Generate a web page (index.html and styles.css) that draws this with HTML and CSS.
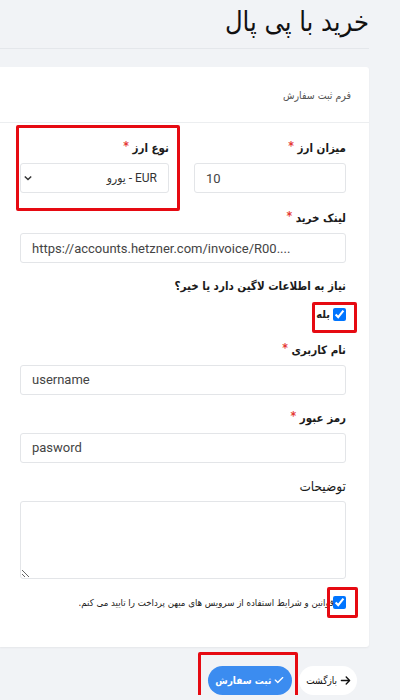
FILE: index.html
```html
<!DOCTYPE html>
<html lang="fa" dir="rtl">
<head>
<meta charset="utf-8">
<title>خرید با پی پال</title>
<link rel="stylesheet" href="styles.css">
</head>
<body>
<div class="page">
  <h1 class="title">خرید با پی پال</h1>
  <div class="rule"></div>
  <div class="card">
    <div class="card-header">فرم ثبت سفارش</div>
    <div class="card-body">
      <div class="row two">
        <div class="field">
          <label class="lbl req">میزان ارز <span class="star">*</span></label>
          <input class="inp" type="text" value="10" dir="ltr">
        </div>
        <div class="field marked">
          <label class="lbl req">نوع ارز <span class="star">*</span></label>
          <div class="select-wrap">
            <select class="inp sel"><option>EUR - یورو</option></select>
            <svg class="chev" viewBox="0 0 10 6" width="8" height="6"><path d="M1 1 L5 5 L9 1" fill="none" stroke="#333" stroke-width="1.8"/></svg>
          </div>
          <span class="redbox rb-select"></span>
        </div>
      </div>
      <div class="field">
        <label class="lbl req">لینک خرید <span class="star">*</span></label>
        <input class="inp" type="text" value="https://accounts.hetzner.com/invoice/R00...." dir="ltr">
      </div>
      <div class="field">
        <div class="lbl req">نیاز به اطلاعات لاگین دارد یا خیر؟</div>
        <label class="check-row">
          <input type="checkbox" checked>
          <span class="yes">بله</span>
          <span class="redbox rb-yes"></span>
        </label>
      </div>
      <div class="field gap20 user">
        <label class="lbl req">نام کاربری <span class="star">*</span></label>
        <input class="inp" type="text" value="username" dir="ltr">
      </div>
      <div class="field">
        <label class="lbl req">رمز عبور <span class="star">*</span></label>
        <input class="inp" type="text" value="pasword" dir="ltr">
      </div>
      <div class="field">
        <label class="lbl plain">توضیحات</label>
        <textarea class="inp area"></textarea>
      </div>
      <div class="terms">
        <label class="terms-row">
          <input type="checkbox" checked>
          <span class="terms-text">قوانین و شرایط استفاده از سرویس های میهن پرداخت را تایید می کنم.</span>
          <span class="redbox rb-terms"></span>
        </label>
      </div>
    </div>
  </div>
  <div class="actions">
    <button class="btn back" type="button">
      <svg viewBox="0 0 448 512" width="11" height="11"><path d="M438.6 278.6c12.5-12.5 12.5-32.8 0-45.3l-160-160c-12.5-12.5-32.8-12.5-45.3 0s-12.5 32.8 0 45.3L338.8 224 32 224c-17.7 0-32 14.3-32 32s14.3 32 32 32l306.7 0L233.4 393.4c-12.5 12.5-12.5 32.8 0 45.3s32.8 12.5 45.3 0l160-160z" fill="#111"/></svg>
      <span>بازگشت</span>
    </button>
    <button class="btn submit" type="button">
      <svg viewBox="0 0 448 512" width="10" height="10"><path d="M438.6 105.4c12.5 12.5 12.5 32.8 0 45.3l-256 256c-12.5 12.5-32.8 12.5-45.3 0l-128-128c-12.5-12.5-12.5-32.8 0-45.3s32.8-12.5 45.3 0L160 338.7 393.4 105.4c12.5-12.5 32.8-12.5 45.3 0z" fill="#fff"/></svg>
      <span>ثبت سفارش</span>
      <span class="redbox rb-submit"></span>
    </button>
  </div>
</div>
</body>
</html>
```
FILE: styles.css
```css
* { box-sizing: border-box; }
html, body { margin: 0; padding: 0; }
body {
  background: #f1f3f6;
  font-family: Roboto, "DejaVu Sans Condensed", "DejaVu Sans", sans-serif;
  color: #222;
  overflow: hidden;
}
.page {
  width: 369px;
  margin-right: 31px;
}
.title {
  margin: 0;
  padding-top: 2px;
  height: 48px;
  font-size: 27px;
  font-weight: normal;
  line-height: 40px;
  color: #111;
  font-family: "DejaVu Sans Condensed", "DejaVu Sans", sans-serif;
}
.rule {
  border-top: 1px solid #e4e7eb;
}
.card {
  margin-top: 18px;
  background: #fff;
  border-radius: 0 3px 3px 0;
  box-shadow: 0 1px 2px rgba(0,0,0,0.05);
}
.card-header {
  height: 56px;
  padding: 0 18px;
  display: flex;
  align-items: center;
  font-family: "DejaVu Sans Condensed", "DejaVu Sans", sans-serif;
  font-size: 10.5px;
  color: #555;
  border-bottom: 1px solid #eceef0;
}
.card-body {
  padding: 13px 23px 33px 20px;
}
.row.two {
  display: grid;
  grid-template-columns: 152px 1fr;
  column-gap: 25px;
}
.field {
  position: relative;
  margin-bottom: 13px;
}
.field.gap20 { margin-top: 7px; }
.field.user { margin-bottom: 11px; }
.lbl {
  display: block;
  font-family: "DejaVu Sans Condensed", "DejaVu Sans", sans-serif;
  font-size: 11.5px;
  line-height: 20px;
  margin-bottom: 5px;
  color: #1b1b1b;
}
.lbl.req { font-weight: bold; }
.lbl.plain { font-weight: normal; font-size: 13.5px; }
.star {
  color: #e53935;
  font-size: 12px;
  vertical-align: 2px;
}
.inp {
  display: block;
  width: 100%;
  height: 30px;
  border: 1px solid #e3e5e8;
  border-radius: 3px;
  background: #fff;
  font-family: Roboto, "DejaVu Sans Condensed", "DejaVu Sans", sans-serif;
  font-size: 13px;
  color: #444;
  padding: 0 11px;
  outline: none;
}
.select-wrap { position: relative; }
.sel {
  appearance: none;
  -webkit-appearance: none;
  direction: rtl;
  padding-right: 11px;
  font-size: 12px;
  color: #333;
}
.chev {
  position: absolute;
  left: 4px;
  top: 12px;
  pointer-events: none;
}
.area {
  height: 78px;
  resize: vertical;
  padding: 8px 11px;
}
.redbox {
  position: absolute;
  border: 3px solid #e60a12;
  border-radius: 2px;
  pointer-events: none;
}
.rb-select {
  top: -11px;
  bottom: -18px;
  left: -4px;
  right: -11px;
}
.check-row {
  position: relative;
  display: inline-flex;
  align-items: center;
  gap: 3px;
  height: 20px;
  margin-top: 3px;
  font-family: "DejaVu Sans Condensed", "DejaVu Sans", sans-serif;
}
.check-row input, .terms-row input {
  margin: 0;
  width: 13px;
  height: 13px;
}
.yes { font-size: 11px; font-weight: bold; }
.rb-yes {
  right: -11px;
  top: -2px;
  width: 45px;
  height: 31px;
}
.terms-row {
  position: relative;
  display: inline-flex;
  align-items: center;
  height: 22px;
  font-family: "DejaVu Sans Condensed", "DejaVu Sans", sans-serif;
}
.terms-text {
  font-size: 9.6px;
  color: #222;
  margin-right: -1px;
}
.rb-terms {
  right: -12px;
  top: -5px;
  width: 31px;
  height: 31px;
}
.actions {
  display: flex;
  gap: 7px;
  margin-top: 19px;
  padding-right: 12px;
}
.btn {
  position: relative;
  height: 29px;
  border: none;
  border-radius: 15px;
  display: inline-flex;
  align-items: center;
  gap: 3px;
  font-family: "DejaVu Sans Condensed", "DejaVu Sans", sans-serif;
  font-size: 10px;
  font-weight: bold;
  cursor: pointer;
}
.btn.back {
  background: #fff;
  color: #111;
  padding: 0 6px 0 7px;
  font-weight: normal;
}
.btn.submit {
  background: #3b8cf0;
  color: #fff;
  padding: 0 8px 0 7px;
}
.rb-submit {
  top: -14px;
  bottom: -12px;
  left: -10px;
  right: -6px;
}
```
